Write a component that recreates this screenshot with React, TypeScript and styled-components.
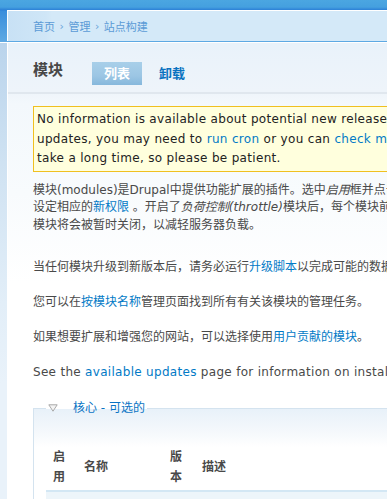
import React from 'react';
import styled, { createGlobalStyle } from 'styled-components';

const GlobalStyle = createGlobalStyle`
  html, body { margin: 0; padding: 0; overflow: hidden; background: #fff; }
  body {
    font-family: "DejaVu Sans", "Noto Sans CJK SC", sans-serif;
    font-size: 12px;
    color: #494949;
  }
  a { color: #027ac6; text-decoration: none; }
`;

const Page = styled.div`
  width: 960px;
`;

const TopBand = styled.div`
  height: 43px;
  box-sizing: border-box;
  padding: 10px 0 0 7px;
  border-bottom: 1px solid #fff;
  background: linear-gradient(to bottom, #4ba6e1 0px, #45a0df 7px, #2c80d7 10px, #3a8edc 11px, #5ea9e3 42px);
`;

const Breadcrumb = styled.div`
  height: 31px;
  border-top: 1px solid #fff;
  border-left: 1px solid #fff;
  box-sizing: border-box;
  padding-left: 25px;
  display: flex;
  align-items: center;
  gap: 4.5px;
  font-size: 11px;
  background: linear-gradient(to right, #c8e1f5 0px, #cfe6f7 38px, #d4e9f8 44px, #d4e9f8 100%);
`;

const Crumb = styled.a`
  color: #5b9bd6;
`;

const Sep = styled.span`
  font-size: 11px;
  color: #6aa5da;
`;

const Body = styled.div`
  display: grid;
  grid-template-columns: 7px 1fr;
`;

const Stripe = styled.div`
  background: linear-gradient(to bottom, #bad4ec 0px, #cfe2f2 120px, #e2eef8 260px, #e9f2fa 340px);
`;

const Main = styled.div`
  border-left: 1px solid #fff;
  padding: 0 25px;
  background: linear-gradient(to bottom, #e9f2fa 0px, #eef4fa 48px, #f3f8fc 60px, #f8fbfd 150px, #fff 240px);
`;

const TitleRow = styled.div`
  display: flex;
  align-items: flex-start;
  height: 30px;
  padding-top: 19px;
  margin: 0 -25px;
  padding-left: 25px;
  border-bottom: 2px solid #e0e7ee;
`;

const Title = styled.h2`
  margin: 0;
  font-size: 15px;
  line-height: 16px;
  font-weight: bold;
  color: #474747;
  width: 59px;
`;

const Tabs = styled.ul`
  display: flex;
  gap: 5px;
  margin: 0;
  padding: 0;
  list-style: none;
`;

const Tab = styled.li<{ $active?: boolean }>`
  height: 23px;
  line-height: 23px;
  padding: 0 12px;
  font-size: 13px;
  font-weight: bold;
  color: ${(p) => (p.$active ? '#fff' : '#0a72c0')};
  background: ${(p) => (p.$active ? 'linear-gradient(to bottom, #a8cfe9 0%, #9cc6e4 60%, #86b8dc 100%)' : 'transparent')};
`;

const Warning = styled.div`
  margin-top: 12px;
  border: 1px solid #f0c020;
  background: #ffd;
  padding: 3px 3px 2px;
  color: #222;
  line-height: 19.5px;
  letter-spacing: 0.32px;
  white-space: nowrap;
`;

const Help = styled.div`
  margin-top: 10px;
  margin-bottom: 25px;
  line-height: 17.5px;
  white-space: nowrap;
`;

const Para = styled.p<{ $gap?: number; $latin?: boolean }>`
  margin: ${(p) => p.$gap ?? 0}px 0 0;
  line-height: 17.5px;
  white-space: nowrap;
  letter-spacing: ${(p) => (p.$latin ? '0.3px' : 'normal')};
`;

const Em = styled.em`
  font-style: italic;
`;

const Fieldset = styled.fieldset`
  margin: 18px 0 0;
  padding: 0 12px;
  border: 1px solid #d4e3ef;
  background: linear-gradient(to bottom, #e8f1f9 0px, #f6f9fc 25px, #fff 38px);
  min-width: 0;
`;

const Legend = styled.legend`
  padding: 0 2px;
  line-height: 17.5px;
`;

const LegendLink = styled.a`
  display: inline-flex;
  align-items: center;
  gap: 15px;
  color: #0a74c4;
`;

const Table = styled.table`
  margin-top: 25px;
  border-collapse: collapse;
  table-layout: fixed;
  width: 900px;
`;

const Th = styled.th<{ $w?: number }>`
  ${(p) => (p.$w ? `width: ${p.$w}px;` : '')}
  padding: 4px 7px 3px;
  text-align: left;
  vertical-align: middle;
  font-weight: bold;
  line-height: 20px;
  color: #494949;
  border-bottom: 2px solid #d3e7f4;
  box-sizing: border-box;
`;

const Row = styled.tr`
  background: #edf5fa;
`;

const Td = styled.td`
  padding: 7px 7px;
  height: 30px;
  vertical-align: top;
`;

const Check = styled.span`
  display: block;
  margin-left: 3px;
  width: 13px;
  height: 13px;
  box-sizing: border-box;
  border: 1px solid #2e5377;
  background: linear-gradient(#dfe6ee, #fff);
`;

const Triangle = () => (
  <svg width="10" height="8" viewBox="0 0 10 8">
    <path d="M0.8 0.8 H9.2 L5 7.2 Z" fill="#f4f4f4" stroke="#a9a9a9" strokeWidth="1" />
  </svg>
);

export default function App() {
  return (
    <Page>
      <GlobalStyle />
      <TopBand>
        <Breadcrumb>
          <Crumb href="#">首页</Crumb>
          <Sep>›</Sep>
          <Crumb href="#">管理</Crumb>
          <Sep>›</Sep>
          <Crumb href="#">站点构建</Crumb>
        </Breadcrumb>
      </TopBand>
      <Body>
        <Stripe />
        <Main>
          <TitleRow>
            <Title>模块</Title>
            <Tabs>
              <Tab $active>列表</Tab>
              <Tab>卸载</Tab>
            </Tabs>
          </TitleRow>
          <Warning>
            No information is available about potential new releases for currently installed modules and themes. To check for
            <br />
            updates, you may need to <a href="#">run cron</a> or you can <a href="#">check manually</a>. Please note that checking for available updates can
            <br />
            take a long time, so please be patient.
          </Warning>
          <Help>
            模块(modules)是Drupal中提供功能扩展的插件。选中<Em>启用</Em>框并点击<Em>保存配置</Em>按钮即可启用模块。启用模块后，可能需要为其
            <br />
            设定相应的<a href="#">新权限</a> 。开启了<Em>负荷控制(throttle)</Em>模块后，每个模块前都有<Em>负荷控制</Em>复选框，选中后，当网站负荷过高时，该
            <br />
            模块将会被暂时关闭，以减轻服务器负载。
          </Help>
          <Para>
            当任何模块升级到新版本后，请务必运行<a href="#">升级脚本</a>以完成可能的数据库更新。
          </Para>
          <Para $gap={17.5}>
            您可以在<a href="#">按模块名称</a>管理页面找到所有有关该模块的管理任务。
          </Para>
          <Para $gap={17}>
            如果想要扩展和增强您的网站，可以选择使用<a href="#">用户贡献的模块</a>。
          </Para>
          <Para $gap={18} $latin>
            See the <a href="#">available updates</a> page for information on installed modules with new versions released.
          </Para>
          <Fieldset>
            <Legend>
              <LegendLink href="#">
                <Triangle />
                核心 - 可选的
              </LegendLink>
            </Legend>
            <Table>
              <thead>
                <tr>
                  <Th $w={31}>启用</Th>
                  <Th $w={86}>名称</Th>
                  <Th $w={32}>版本</Th>
                  <Th>描述</Th>
                </tr>
              </thead>
              <tbody>
                <Row>
                  <Td>
                    <Check />
                  </Td>
                  <Td />
                  <Td />
                  <Td />
                </Row>
              </tbody>
            </Table>
          </Fieldset>
        </Main>
      </Body>
    </Page>
  );
}
